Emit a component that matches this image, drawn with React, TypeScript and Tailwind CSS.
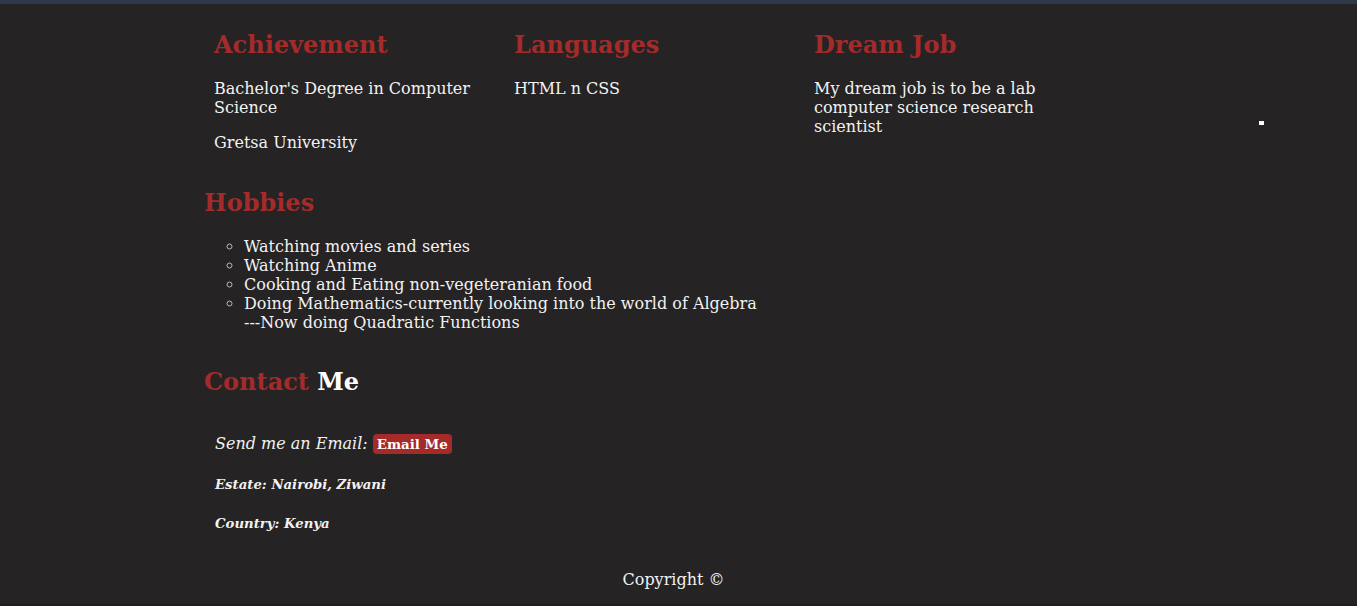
import React from 'react';

const serif = "font-['DejaVu_Serif',serif]";

const App = () => {
  return (
    <div className={`relative min-h-[606px] bg-[#252324] text-[#f2f2f2] ${serif} flex flex-col`}>
      <div className="h-[4px] bg-[#2d3a4b]" />

      <main className="w-[949px] mx-auto pt-[7px] flex-1">
        <div className="flex">
          <div className="w-[300px] px-[10px]">
            <h2 className="text-[24px] leading-[28px] font-bold text-[#a52a2a] my-[20px]">Achievement</h2>
            <p className="text-[16px] leading-[19px] w-[270px]">Bachelor's Degree in Computer Science</p>
            <p className="text-[16px] leading-[19px] mt-[16px]">Gretsa University</p>
          </div>
          <div className="w-[300px] px-[10px]">
            <h2 className="text-[24px] leading-[28px] font-bold text-[#a52a2a] my-[20px]">Languages</h2>
            <p className="text-[16px] leading-[19px]">HTML n CSS</p>
          </div>
          <div className="w-[300px] px-[10px]">
            <h2 className="text-[24px] leading-[28px] font-bold text-[#a52a2a] my-[20px]">Dream Job</h2>
            <p className="text-[16px] leading-[19px] w-[240px]">My dream job is to be a lab computer science research scientist</p>
          </div>
        </div>

        <section className="mt-[37px]">
          <h2 className="text-[24px] leading-[28px] font-bold text-[#a52a2a]">Hobbies</h2>
          <ul className="mt-[20px] pl-[40px] w-[557px] list-[circle] text-[16px] leading-[19px] marker:text-[#bbbbbb]">
            <li>Watching movies and series</li>
            <li>Watching Anime</li>
            <li>Cooking and Eating non-vegeteranian food</li>
            <li>Doing Mathematics-currently looking into the world of Algebra ---Now doing Quadratic Functions</li>
          </ul>
        </section>

        <section className="mt-[36px]">
          <h2 className="text-[24px] leading-[28px] font-bold text-[#a52a2a]">
            Contact <span className="text-white">Me</span>
          </h2>
          <address className="pl-[11px] mt-[37px] italic">
            <div className="flex items-center h-[21px] text-[16px]">
              <span>Send me an Email:</span>
              <button className="ml-[5px] not-italic font-bold text-[13.33px] leading-[16px] px-[4px] py-[2px] bg-[#a52a2a] text-white rounded-[4px]">
                Email Me
              </button>
            </div>
            <h5 className="mt-[23px] text-[13.28px] leading-[15.5px] font-bold">Estate: Nairobi, Ziwani</h5>
            <h5 className="mt-[23px] text-[13.28px] leading-[15.5px] font-bold">Country: Kenya</h5>
          </address>
        </section>
      </main>

      <footer className="text-center text-[16px] leading-[19px] pr-[10px] pt-[38px] pb-[15px] border-b-2 border-[#1e1e1e]">
        Copyright ©
      </footer>

      <div className="absolute left-[1259px] top-[121px] w-[5px] h-[4px] bg-white" />
    </div>
  );
};

export default App;
